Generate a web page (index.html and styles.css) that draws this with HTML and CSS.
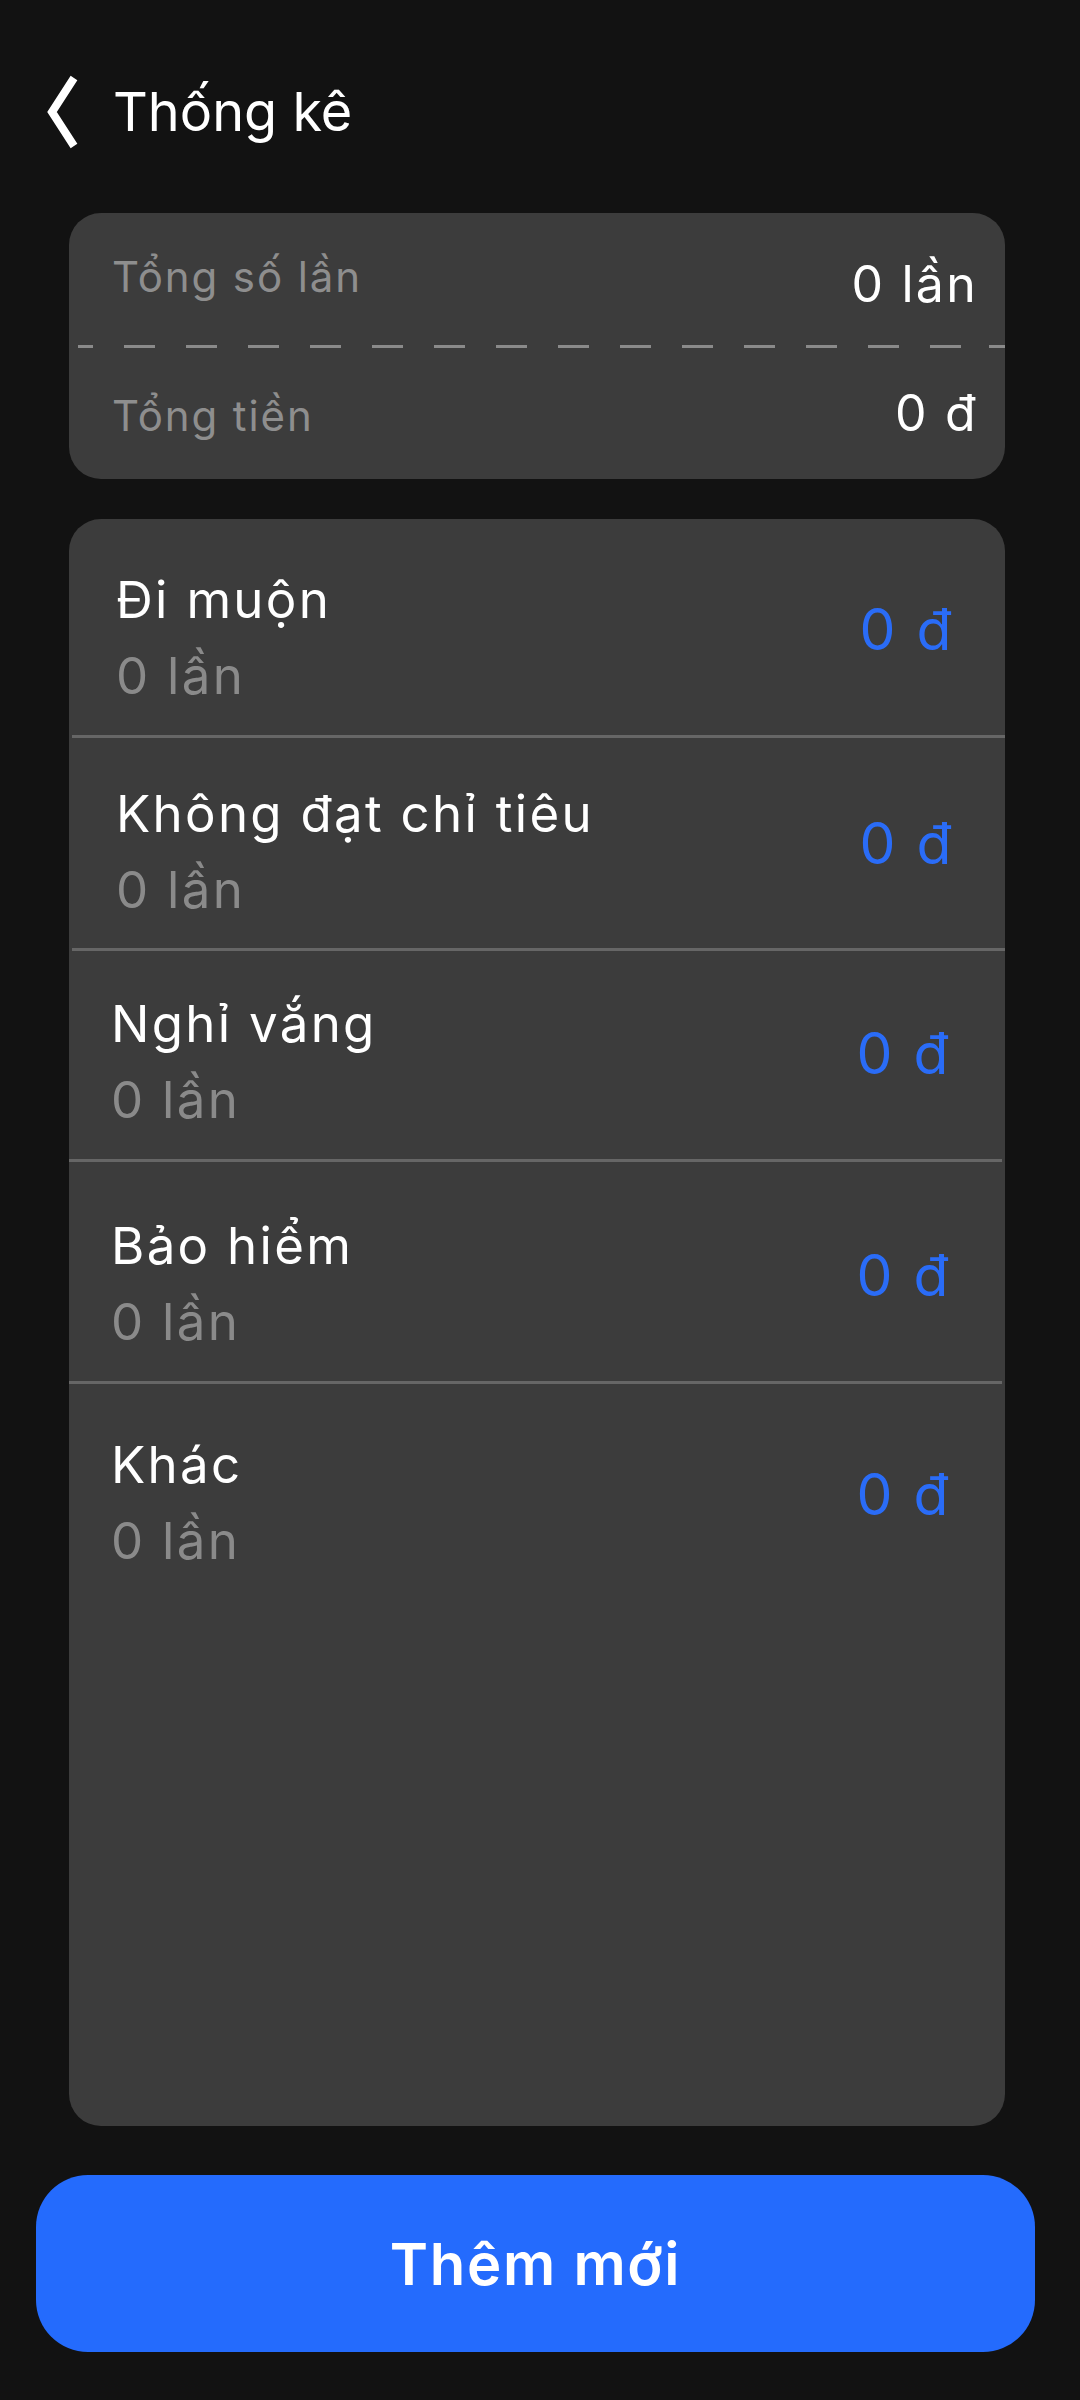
FILE: index.html
```html
<!DOCTYPE html>
<html lang="vi">
<head>
<meta charset="utf-8">
<title>Thống kê</title>
<link rel="stylesheet" href="styles.css">
</head>
<body>
<div class="screen">
  <header class="header">
    <svg class="back" width="40" height="80" viewBox="0 0 40 80">
      <polyline points="34,6 12,40 34,74" fill="none" stroke="#ffffff" stroke-width="8" stroke-linejoin="miter" stroke-linecap="butt"/>
    </svg>
    <h1 class="title">Thống kê</h1>
  </header>

  <section class="summary">
    <div class="sum-row sum-row-top">
      <span class="sum-label">Tổng số lần</span>
      <span class="sum-value sum-value-top">0 lần</span>
    </div>
    <div class="dashed"></div>
    <div class="sum-row sum-row-bottom">
      <span class="sum-label">Tổng tiền</span>
      <span class="sum-value">0 đ</span>
    </div>
  </section>

  <section class="list">
    <div class="item item-1">
      <div class="item-text">
        <div class="item-name">Đi muộn</div>
        <div class="item-count">0 lần</div>
      </div>
      <div class="item-amount">0 đ</div>
    </div>
    <div class="item item-2">
      <div class="item-text">
        <div class="item-name">Không đạt chỉ tiêu</div>
        <div class="item-count">0 lần</div>
      </div>
      <div class="item-amount">0 đ</div>
    </div>
    <div class="item item-3 shifted">
      <div class="item-text">
        <div class="item-name">Nghỉ vắng</div>
        <div class="item-count">0 lần</div>
      </div>
      <div class="item-amount">0 đ</div>
    </div>
    <div class="item item-4 shifted">
      <div class="item-text">
        <div class="item-name">Bảo hiểm</div>
        <div class="item-count">0 lần</div>
      </div>
      <div class="item-amount">0 đ</div>
    </div>
    <div class="item item-5 shifted last">
      <div class="item-text">
        <div class="item-name">Khác</div>
        <div class="item-count">0 lần</div>
      </div>
      <div class="item-amount">0 đ</div>
    </div>
  </section>

  <button class="add-btn" type="button">Thêm mới</button>
</div>
</body>
</html>
```

FILE: styles.css
```css
html, body {
  margin: 0;
  padding: 0;
  background: #121212;
}

body {
  font-family: Inter, "Noto Sans", "DejaVu Sans", sans-serif;
  color: #ffffff;
}

.screen {
  width: 1080px;
  height: 2400px;
  display: flex;
  flex-direction: column;
  box-sizing: border-box;
}

/* Header */
.header {
  height: 156px;
  padding-top: 34px;
  padding-left: 40px;
  display: flex;
  align-items: center;
  gap: 33px;
}

.back {
  display: block;
  flex: none;
}

.title {
  margin: 0;
  font-size: 54px;
  font-weight: 400;
  line-height: 1.21;
  color: #ffffff;
}

/* Summary card */
.summary {
  margin: 23px 75px 0 69px;
  height: 266px;
  background: #3c3c3c;
  border-radius: 32px;
  overflow: hidden;
  display: flex;
  flex-direction: column;
}

.sum-row {
  display: flex;
  justify-content: space-between;
  padding: 0 27px 0 43px;
  box-sizing: border-box;
}

.sum-row-top {
  height: 132px;
  align-items: flex-start;
  padding-top: 39px;
}

.sum-row-bottom {
  flex: 1;
  align-items: baseline;
  padding-top: 35px;
}

.sum-label {
  font-size: 42px;
  line-height: 1.21;
  letter-spacing: 0.045em;
  color: #8e8e8e;
}

.sum-value {
  font-size: 50px;
  line-height: 1.21;
  letter-spacing: 0.045em;
  color: #ffffff;
}

.sum-value-top {
  margin-top: 2px;
}

.dashed {
  height: 3px;
  margin-left: 9px;
  background-image: repeating-linear-gradient(to right, #8a8a8a 0 31px, transparent 31px 62px);
  background-position: -16px 0;
  flex: none;
}

/* List card */
.list {
  margin: 40px 75px 0 69px;
  height: 1607px;
  background: #3c3c3c;
  border-radius: 32px;
  overflow: hidden;
  display: flex;
  flex-direction: column;
}

.item {
  display: flex;
  align-items: center;
  justify-content: space-between;
  padding: 40px 51px 21px 44px;
  margin-left: 3px;
  border-bottom: 3px solid #666666;
  flex: none;
}

.item.shifted {
  margin-left: 0;
  margin-right: 3px;
  padding-left: 42px;
}

.item.last {
  border-bottom: none;
}

.item-1 { padding-top: 43px; padding-bottom: 21px; }
.item-2 { padding-top: 38px; padding-bottom: 20px; }
.item-3 { padding-top: 35px; padding-bottom: 21px; }
.item-4 { padding-top: 46px; padding-bottom: 21px; }
.item-5 { padding-top: 43px; padding-bottom: 22px; }

.item-text {
  display: flex;
  flex-direction: column;
}

.item-name {
  font-size: 51px;
  line-height: 76px;
  letter-spacing: 0.045em;
  color: #ffffff;
}

.item-count {
  font-size: 51px;
  line-height: 76px;
  letter-spacing: 0.045em;
  color: #8a8a8a;
}

.item-amount {
  font-size: 57px;
  line-height: 1.21;
  letter-spacing: 0.045em;
  color: #2a6cf7;
  margin-bottom: 16px;
}

/* Button */
.add-btn {
  margin: 49px 45px 0 36px;
  height: 177px;
  border: none;
  border-radius: 52px;
  background: #246bfd;
  color: #ffffff;
  font-family: Inter, "Noto Sans", "DejaVu Sans", sans-serif;
  font-size: 58px;
  font-weight: 600;
  letter-spacing: 0.03em;
  padding: 0;
  cursor: pointer;
}
```
